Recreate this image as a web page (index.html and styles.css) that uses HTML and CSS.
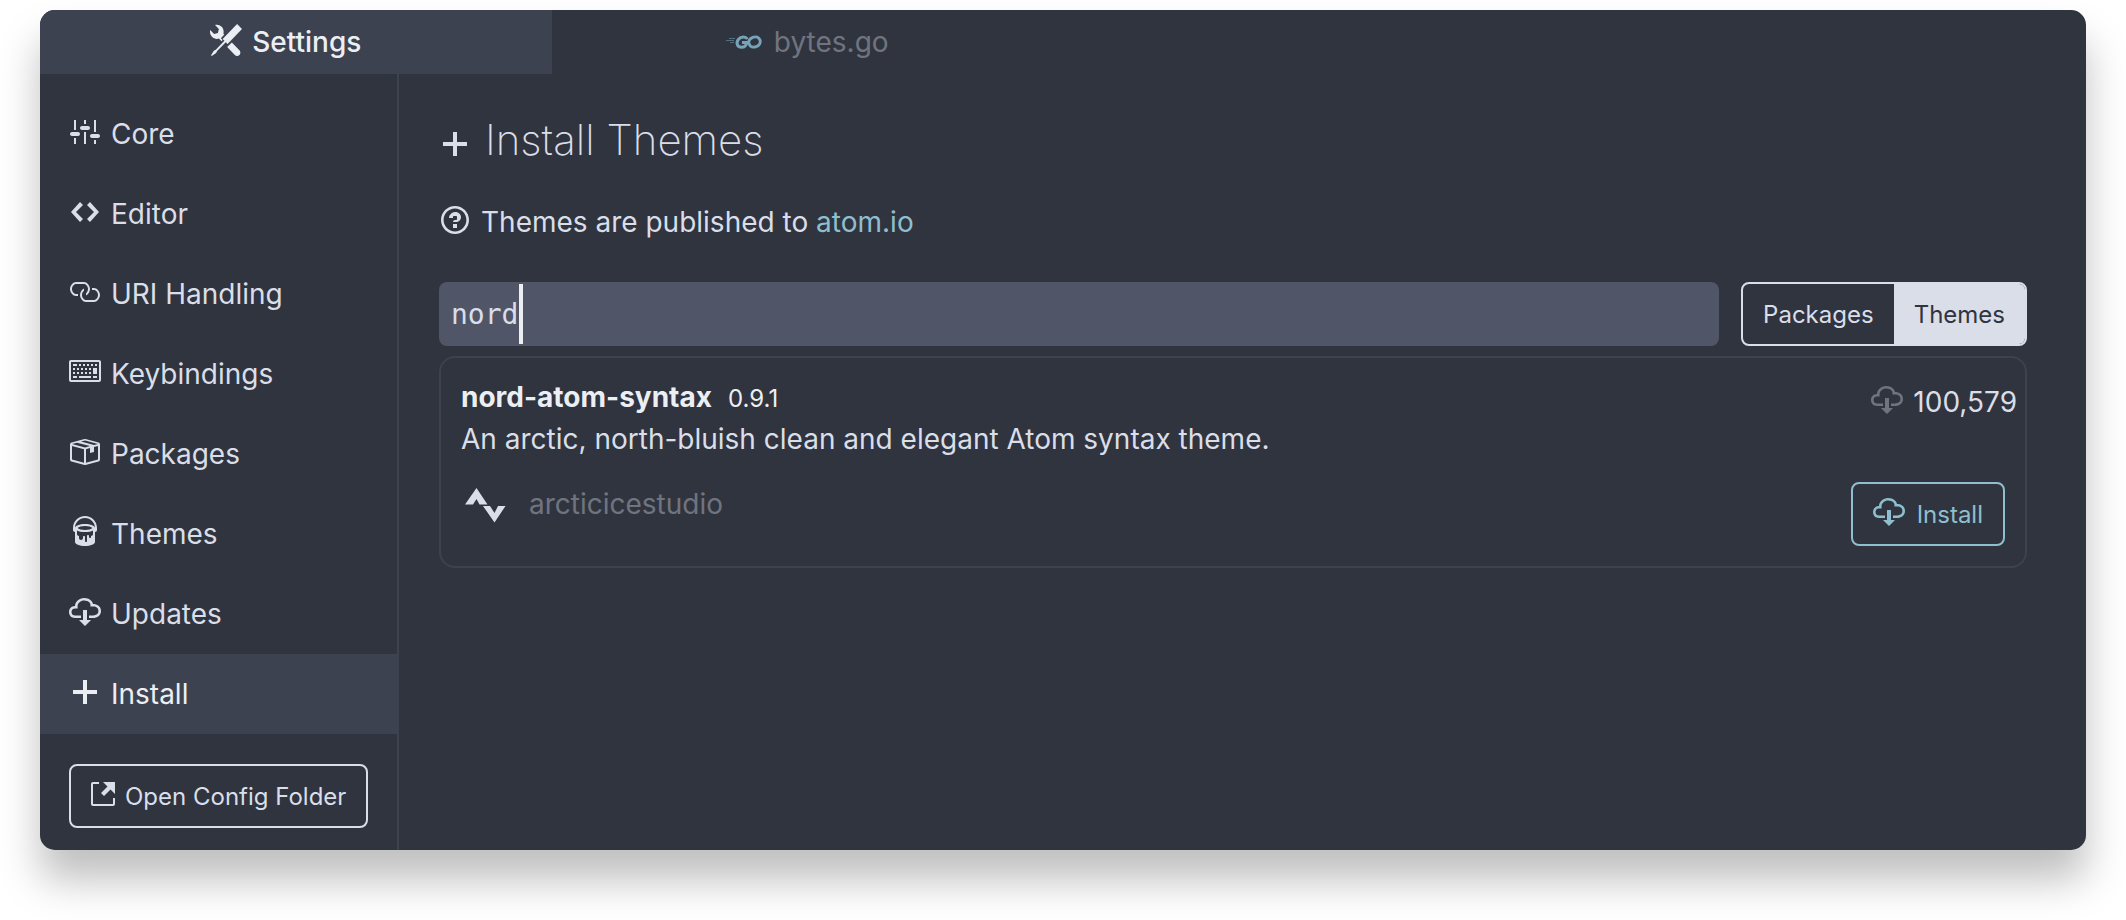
FILE: index.html
```html
<!DOCTYPE html>
<html lang="en">
<head>
<meta charset="utf-8">
<title>Settings</title>
<link rel="stylesheet" href="styles.css">
</head>
<body>
<svg class="sprite" aria-hidden="true">
  <symbol id="tools" viewBox="0 0 16 16"><path d="M4.48 7.27c.26.26 1.28 1.33 1.28 1.33l.56-.58-.88-.91 1.69-1.8s-.76-.74-.43-.45c.32-1.19.03-2.51-.87-3.44C4.93.5 3.66.2 2.52.51l1.93 2-.51 1.96-1.89.52-1.93-1.99C-.19 4.17.1 5.48 1 6.4c.94.98 2.29 1.26 3.48.87zm6.44 1.94l-2.33 2.3 3.84 3.98c.31.33.73.49 1.14.49.41 0 .82-.16 1.14-.49.63-.65.63-1.7 0-2.35l-3.79-3.93zM16 2.53L13.55 0 6.33 7.46l.88.91-4.31 4.46-.99.53-1.39 2.27.35.37 2.2-1.44.51-1.02L7.9 9.08l.88.91L16 2.53z"/></symbol>
  <symbol id="sliders" viewBox="0.5 0 16 16"><path d="M4 7H3V2h1v5zm-1 7h1v-3H3v3zm5 0h1V8H8v6zm5 0h1v-2h-1v2zm1-12h-1v6h1V2zM9 2H8v2h1V2zM5 8H2c-.55 0-1 .45-1 1s.45 1 1 1h3c.55 0 1-.45 1-1s-.45-1-1-1zm5-3H7c-.55 0-1 .45-1 1s.45 1 1 1h3c.55 0 1-.45 1-1s-.45-1-1-1zm5 4h-3c-.55 0-1 .45-1 1s.45 1 1 1h3c.55 0 1-.45 1-1s-.45-1-1-1z"/></symbol>
  <symbol id="code" viewBox="-1 0 16 16"><path d="M9.5 3L8 4.5 11.5 8 8 11.5 9.5 13 14 8 9.5 3zm-5 0L0 8l4.5 5L6 11.5 2.5 8 6 4.5 4.5 3z"/></symbol>
  <symbol id="link" viewBox="0.5 0 16 16"><path d="M4 9h1v1H4c-1.5 0-3-1.69-3-3.5S2.55 3 4 3h4c1.45 0 3 1.69 3 3.5 0 1.41-.91 2.72-2 3.25V8.59c.58-.45 1-1.27 1-2.09C10 5.22 8.98 4 8 4H4c-.98 0-2 1.22-2 2.5S3 9 4 9zm9-3h-1v1h1c1 0 2 1.22 2 2.5S13.98 12 13 12H9c-.98 0-2-1.22-2-2.5 0-.83.42-1.64 1-2.09V6.25c-1.09.53-2 1.84-2 3.25C6 11.31 7.55 13 9 13h4c1.45 0 3-1.69 3-3.5S14.5 6 13 6z"/></symbol>
  <symbol id="keyboard" viewBox="0 0 16 16"><path d="M10 5H9V4h1v1zM3 6H2v1h1V6zm5-2H7v1h1V4zM4 4H2v1h2V4zm8 7h2v-1h-2v1zM8 7h1V6H8v1zm-4 3H2v1h2v-1zm8-6h-1v1h1V4zm2 0h-1v1h1V4zm-2 5h2V6h-2v3zm4-6v9c0 .55-.45 1-1 1H1c-.55 0-1-.45-1-1V3c0-.55.45-1 1-1h14c.55 0 1 .45 1 1zm-1 0H1v9h14V3zM6 7h1V6H6v1zm0-3H5v1h1V4zM4 7h1V6H4v1zm1 4h6v-1H5v1zm5-4h1V6h-1v1zM3 8H2v1h1V8zm5 0v1h1V8H8zM6 8v1h1V8H6zM5 8H4v1h1V8zm5 1h1V8h-1v1z"/></symbol>
  <symbol id="package" viewBox="0.5 0 16 16"><path d="M1 4.27v7.47c0 .45.3.84.75.97l6.5 1.73c.16.05.34.05.5 0l6.5-1.73c.45-.13.75-.52.75-.97V4.27c0-.45-.3-.84-.75-.97l-6.5-1.74a1.4 1.4 0 0 0-.5 0L1.75 3.3c-.45.13-.75.52-.75.97zm7 9.09l-6-1.59V5l6 1.61v6.75zM2 4l2.5-.67L11 5.06l-2.5.67L2 4zm13 7.77l-6 1.59V6.61l2-.55V8.5l2-.53V5.53L15 5v6.77zm-2-7.24L6.5 2.8l2-.53L15 4l-2 .53z"/></symbol>
  <symbol id="paintcan" viewBox="-2 0 16 16"><path d="M6 0C2.69 0 0 2.69 0 6v1c0 .55.45 1 1 1v5c0 1.1 2.24 2 5 2s5-.9 5-2V8c.55 0 1-.45 1-1V6c0-3.31-2.69-6-6-6zm3 10v.5c0 .28-.22.5-.5.5s-.5-.22-.5-.5V10c0-.28-.22-.5-.5-.5s-.5.22-.5.5v2.5c0 .28-.22.5-.5.5s-.5-.22-.5-.5v-2c0-.28-.22-.5-.5-.5s-.5.22-.5.5v.5c0 .55-.45 1-1 1s-1-.45-1-1v-1c-.55 0-1-.45-1-1V7.2c.91.49 2.36.8 4 .8 1.64 0 3.09-.31 4-.8V9c0 .55-.45 1-1 1zM6 7c-1.68 0-3.12-.41-3.71-1C2.88 5.41 4.32 5 6 5c1.68 0 3.12.41 3.71 1-.59.59-2.03 1-3.71 1zm0-3c-2.76 0-5 .89-5 2 0-2.76 2.24-5 5-5s5 2.24 5 5c0-1.1-2.24-2-5-2z"/></symbol>
  <symbol id="cloud" viewBox="0 0 16 16"><path d="M9 12h2l-3 3-3-3h2V7h2v5zm3-8c0-.44-.91-3-4.5-3C5.08 1 3 2.92 3 5 1.02 5 0 6.52 0 8c0 1.53 1 3 3 3h3V9.7H3C1.38 9.7 1.3 8.28 1.3 8c0-.17.05-1.7 1.7-1.7h1.3V5c0-1.39 1.56-2.7 3.2-2.7 2.55 0 3.13 1.55 3.2 1.8v1.2H12c.81 0 2.7.22 2.7 2.2 0 2.09-2.25 2.2-2.7 2.2h-2V11h2c2.08 0 4-1.16 4-3.5C16 5.06 14.08 4 12 4z"/></symbol>
  <symbol id="plus" viewBox="-2 0 16 16"><path d="M12 9H7v5H5V9H0V7h5V2h2v5h5z"/></symbol>
  <symbol id="external" viewBox="0 0 12 16"><path d="M11 10h1v3c0 .55-.45 1-1 1H1c-.55 0-1-.45-1-1V3c0-.55.45-1 1-1h3v1H1v10h10v-3zM6 2l2.25 2.25L5 7.5 6.5 9l3.25-3.25L12 8V2H6z"/></symbol>
  <symbol id="question" viewBox="-1 0 16 16"><path d="M6 10h2v2H6v-2zm4-3.5C10 8.64 8 9 8 9H6c0-.55.45-1 1-1h.5c.28 0 .5-.22.5-.5v-1c0-.28-.22-.5-.5-.5h-1c-.28 0-.5.22-.5.5V7H4c0-1.5 1.5-3 3-3s3 1 3 2.5zM7 2.3c3.14 0 5.7 2.56 5.7 5.7s-2.56 5.7-5.7 5.7A5.71 5.71 0 0 1 1.3 8c0-3.14 2.56-5.7 5.7-5.7zM7 1C3.14 1 0 4.14 0 8s3.14 7 7 7 7-3.14 7-7-3.14-7-7-7z"/></symbol>
</svg>

<div class="window">
  <nav class="tabs" aria-label="Open tabs">
    <button class="tab tab-active" type="button"><svg class="icon"><use href="#tools"/></svg>Settings</button>
    <button class="tab" type="button">
      <svg class="icon-go" viewBox="0 0 36 14" fill="none" aria-hidden="true">
        <path class="go-speed" d="M0 5.500h8M3 3.500h6M4 7.500h4"/>
        <path class="go-mark" d="M21.500 4C19.500 1.200 15 1.200 12.500 4.200C9.800 7.600 11 12.200 15.500 12.200C18.500 12.200 20.300 10.500 20.800 7.400H16"/>
        <ellipse class="go-mark" cx="28.500" cy="7" rx="5.800" ry="5" transform="rotate(-20 28.500 7)"/>
      </svg>bytes.go</button>
  </nav>

  <div class="workspace">
    <aside class="sidebar">
      <nav class="menu" aria-label="Settings sections">
        <a class="menu-item" href="#core"><svg class="icon"><use href="#sliders"/></svg>Core</a>
        <a class="menu-item" href="#editor"><svg class="icon"><use href="#code"/></svg>Editor</a>
        <a class="menu-item" href="#uri"><svg class="icon"><use href="#link"/></svg>URI Handling</a>
        <a class="menu-item" href="#keys"><svg class="icon"><use href="#keyboard"/></svg>Keybindings</a>
        <a class="menu-item" href="#packages"><svg class="icon"><use href="#package"/></svg>Packages</a>
        <a class="menu-item" href="#themes"><svg class="icon"><use href="#paintcan"/></svg>Themes</a>
        <a class="menu-item" href="#updates"><svg class="icon"><use href="#cloud"/></svg>Updates</a>
        <a class="menu-item menu-item-active" href="#install"><svg class="icon"><use href="#plus"/></svg>Install</a>
      </nav>
      <button class="btn btn-config" type="button"><svg class="icon icon-narrow"><use href="#external"/></svg>Open Config Folder</button>
    </aside>

    <main class="panel">
      <h1 class="title"><svg class="icon"><use href="#plus"/></svg>Install Themes</h1>
      <p class="hint"><svg class="icon"><use href="#question"/></svg><span>Themes are published to <a class="hint-link" href="#atom">atom.io</a></span></p>

      <div class="search">
        <div class="search-field">
          <input class="search-input" type="text" value="nord" aria-label="Search themes">
          <span class="caret"></span>
        </div>
        <div class="toggle">
          <button class="toggle-btn" type="button">Packages</button>
          <button class="toggle-btn toggle-btn-active" type="button">Themes</button>
        </div>
      </div>

      <article class="card">
        <div class="card-top">
          <div>
            <h2 class="card-name">nord-atom-syntax<span class="card-version">0.9.1</span></h2>
            <p class="card-text">An arctic, north-bluish clean and elegant Atom syntax theme.</p>
          </div>
          <div class="downloads"><svg class="icon"><use href="#cloud"/></svg>100,579</div>
        </div>
        <div class="card-meta">
          <a class="author" href="#author">
            <svg class="avatar" viewBox="0 0 48 44" aria-hidden="true"><path d="M4 22.500L15.500 6L26.500 22.500H18.500L15.500 17L12 22.500ZM22 24H29L33.500 31L37 24H44.500L33.500 40.500Z"/></svg>arcticicestudio</a>
          <button class="btn btn-install" type="button"><svg class="icon"><use href="#cloud"/></svg>Install</button>
        </div>
      </article>
    </main>
  </div>
</div>
</body>
</html>
```
FILE: styles.css
```css
* { box-sizing: border-box; }

body {
  margin: 0;
  padding: 10px 40px 70px;
  background: #fff;
  color: #d9dee8;
  font-family: Inter, "Liberation Sans", sans-serif;
  font-size: 28px;
}

h1, h2, p { margin: 0; font-weight: 400; }
a { color: inherit; text-decoration: none; }
button {
  border: 0;
  background: none;
  color: inherit;
  font: inherit;
}

.sprite { display: none; }

.icon {
  flex: none;
  width: 32px;
  height: 32px;
  margin-bottom: 4px;
  fill: currentColor;
}
.icon-narrow { width: 24px; }

.window {
  display: flex;
  flex-direction: column;
  min-height: 840px;
  overflow: hidden;
  border-radius: 15px;
  background: #30343f;
  box-shadow: 0 30px 40px rgba(0, 0, 0, 0.25);
}

.tabs { display: flex; }
.tab {
  display: flex;
  align-items: center;
  justify-content: center;
  gap: 10px;
  width: 25%;
  height: 64px;
  padding: 0;
  color: #70747f;
}
.tab-active {
  padding-right: 20px;
  background: #3d4251;
  color: #ebeff4;
  font-weight: 500;
}
.icon-go { width: 36px; height: 14px; margin-right: 2px; }
.go-speed { stroke: #54707f; stroke-width: 1; }
.go-mark { stroke: #77a3b8; stroke-width: 3; }

.workspace { display: flex; flex: 1; }

.sidebar {
  flex: none;
  width: 359px;
  padding: 20px 0 22px;
  border-right: 2px solid #3d4251;
}
.menu-item {
  display: flex;
  align-items: center;
  gap: 10px;
  height: 80px;
  padding-left: 29px;
}
.menu-item-active { background: #3d4251; color: #ebeff4; }

.btn {
  display: flex;
  align-items: center;
  justify-content: center;
  gap: 10px;
  height: 64px;
  padding: 0 20px;
  border: 2px solid currentColor;
  border-radius: 8px;
  font-size: 24px;
}
.btn-config { margin: 30px 0 0 29px; }
.btn-install { gap: 12px; color: #8fbfce; }

.panel { flex: 1; padding: 30px 59px 40px 40px; }

.title {
  display: flex;
  align-items: center;
  gap: 14px;
  height: 70px;
  font-size: 42px;
  font-weight: 250;
}
.title .icon { margin: 10px 0 0; }

.hint {
  display: flex;
  align-items: center;
  gap: 10px;
  height: 40px;
  margin-top: 28px;
}
.hint-link { color: #8fbfce; }

.search { display: flex; gap: 22px; margin-top: 40px; }
.search-field {
  position: relative;
  flex: 1;
  font-family: "DejaVu Sans Mono", monospace;
}
.search-input {
  width: 100%;
  height: 64px;
  padding: 0 12px;
  border: 0;
  border-radius: 8px;
  outline: 0;
  background: #505668;
  color: #d9dee8;
  font: inherit;
}
.caret {
  position: absolute;
  top: 2px;
  bottom: 2px;
  left: calc(13px + 4ch);
  width: 4px;
  background: #ebeff4;
}

.toggle {
  display: flex;
  overflow: hidden;
  border: 2px solid #d9dee8;
  border-radius: 8px;
}
.toggle-btn { padding: 0 20px; font-size: 24px; }
.toggle-btn-active { background: #d9dee8; color: #30343f; }

.card {
  margin-top: 10px;
  padding: 18px 8px 20px 20px;
  border: 2px solid #3d4251;
  border-radius: 16px;
}
.card-top { display: flex; justify-content: space-between; }
.card-name { color: #ebeff4; font-size: 28px; font-weight: 700; line-height: 42px; }
.card-version { margin-left: 16px; font-size: 24px; font-weight: 400; line-height: 1; }
.card-text { line-height: 42px; }
.downloads { display: flex; align-items: center; gap: 10px; height: 52px; }
.downloads .icon { color: #70747f; }

.card-meta {
  display: flex;
  align-items: flex-start;
  justify-content: space-between;
  margin: 22px 12px 0 0;
}
.author { display: flex; align-items: center; gap: 20px; height: 44px; color: #70747f; }
.avatar { width: 48px; height: 44px; fill: #d9dee8; }
```
